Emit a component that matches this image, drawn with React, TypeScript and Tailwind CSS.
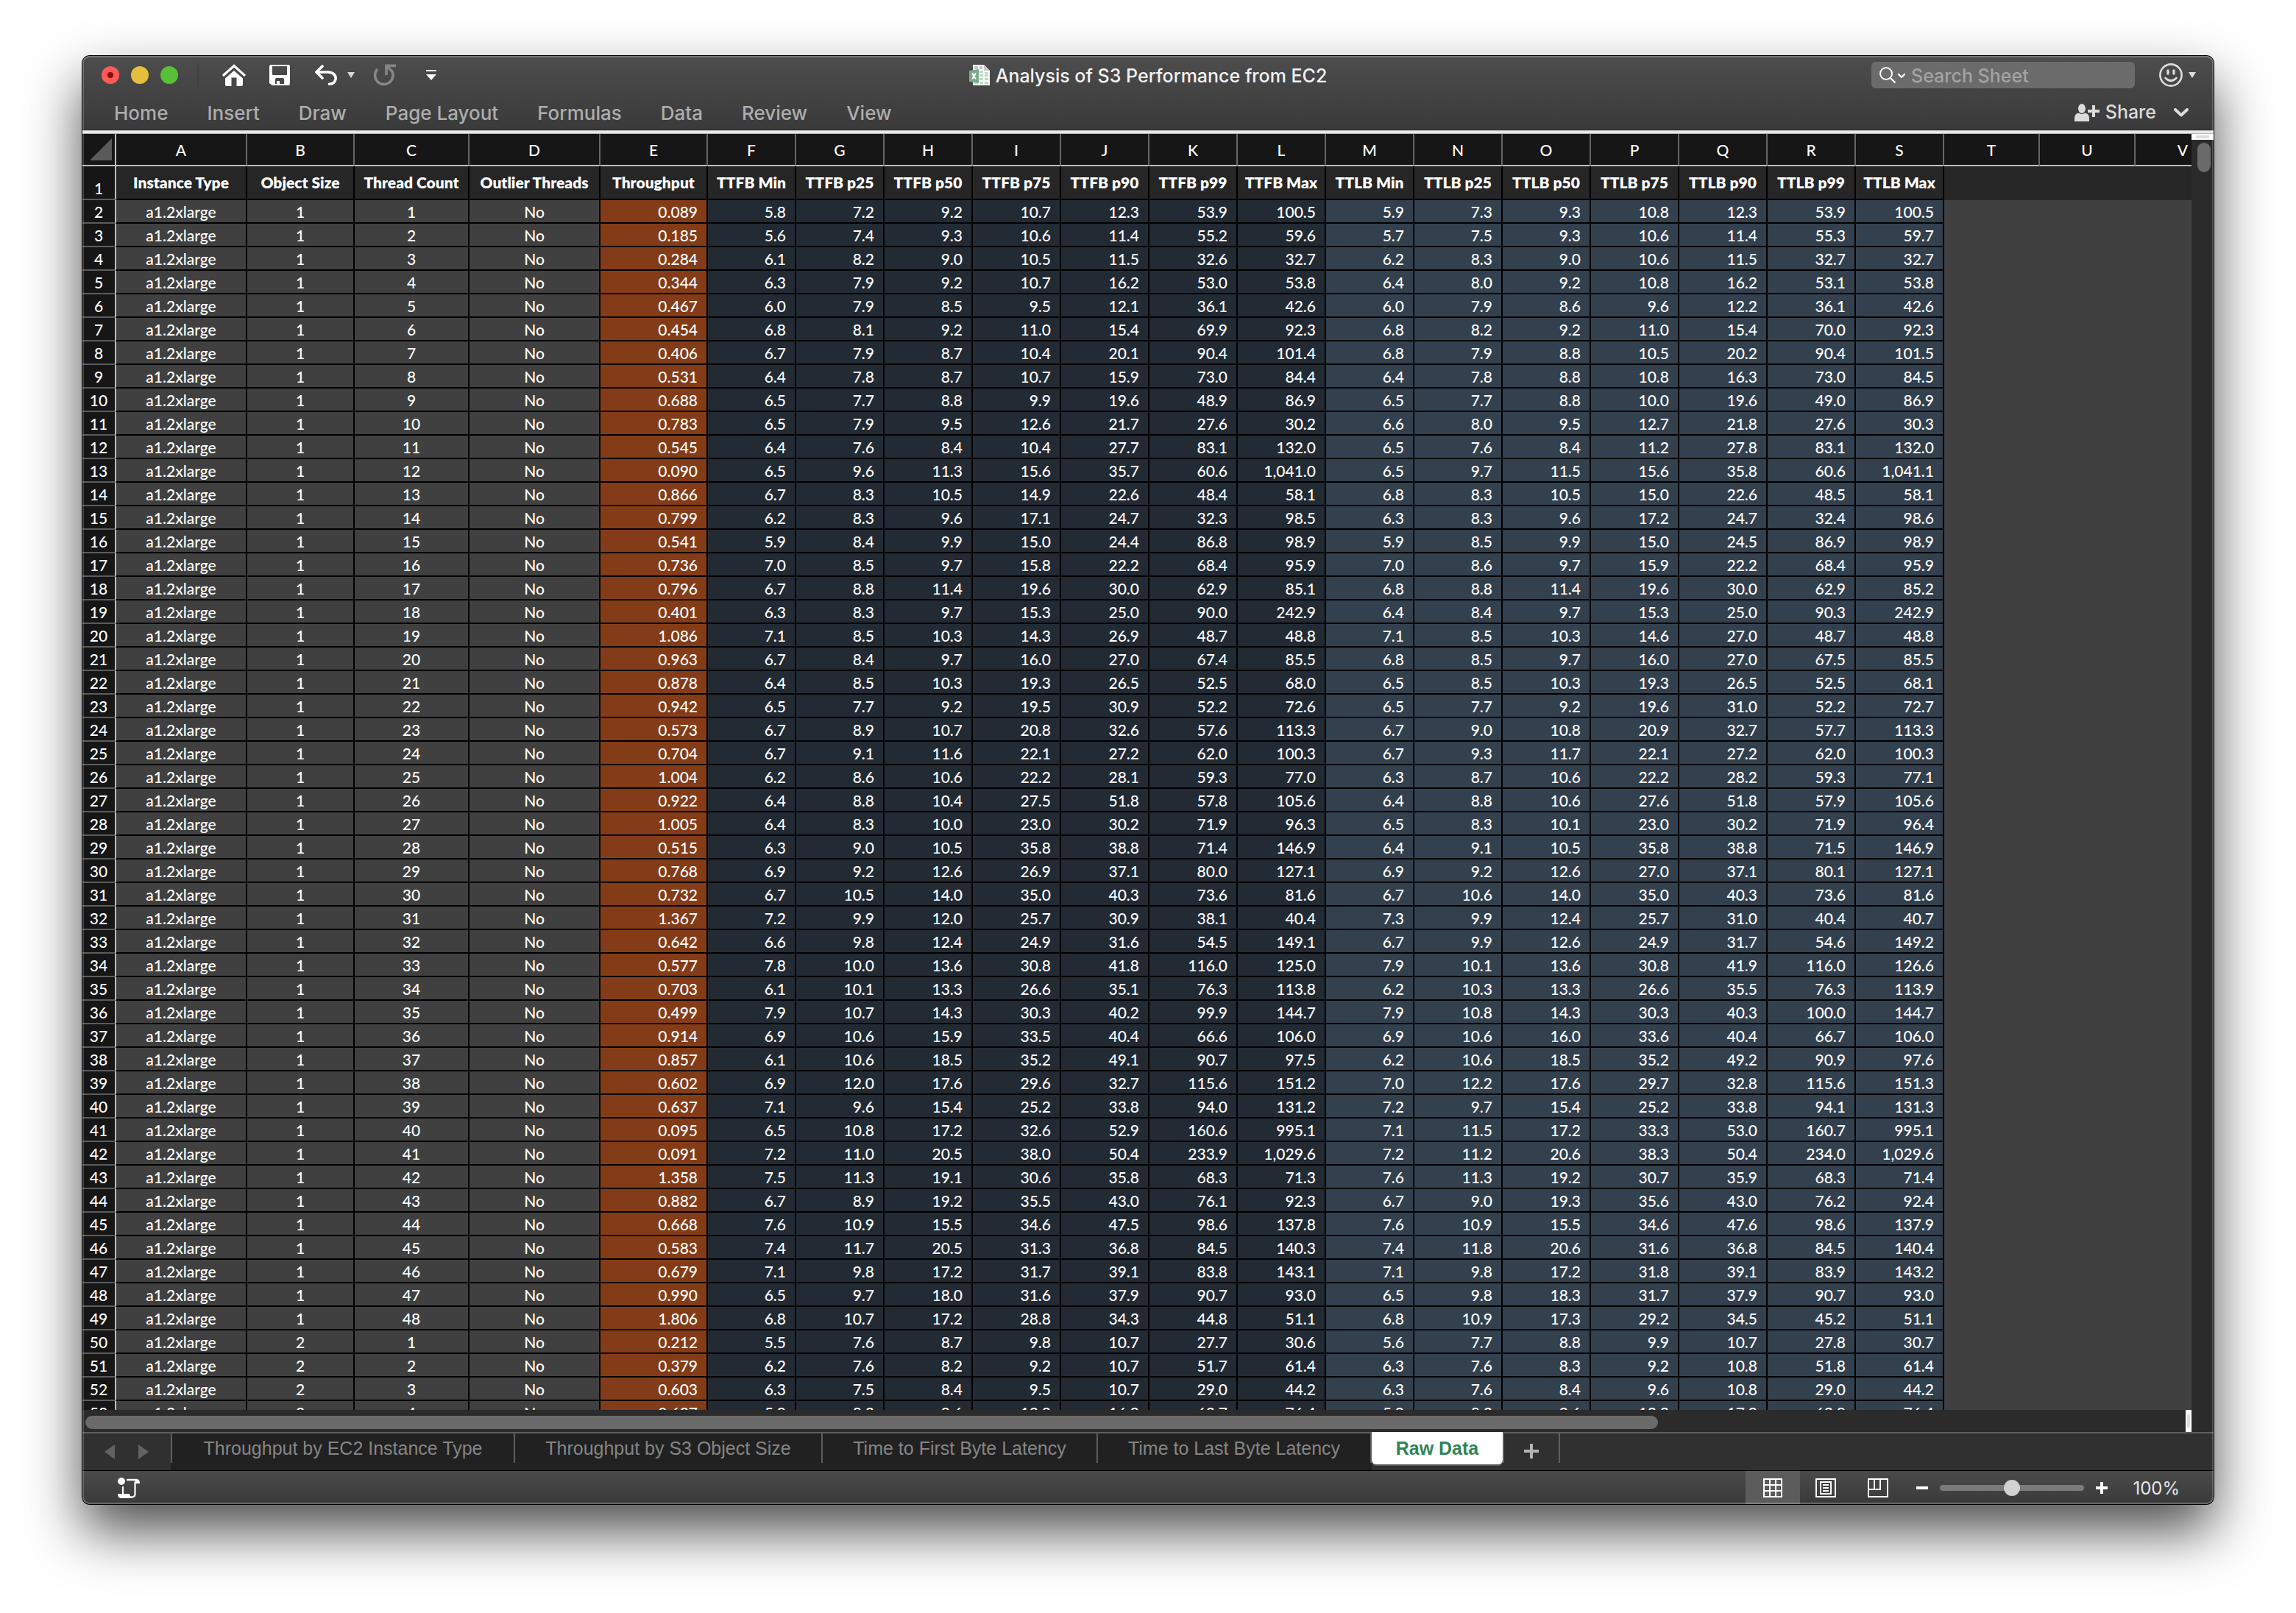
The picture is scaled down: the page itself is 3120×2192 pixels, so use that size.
import React from "react";

const COLUMNS = [
  { letter: "A", title: "Instance Type", width: 178 },
  { letter: "B", title: "Object Size", width: 146 },
  { letter: "C", title: "Thread Count", width: 156 },
  { letter: "D", title: "Outlier Threads", width: 178 },
  { letter: "E", title: "Throughput", width: 146 },
  { letter: "F", title: "TTFB Min", width: 120 },
  { letter: "G", title: "TTFB p25", width: 120 },
  { letter: "H", title: "TTFB p50", width: 120 },
  { letter: "I", title: "TTFB p75", width: 120 },
  { letter: "J", title: "TTFB p90", width: 120 },
  { letter: "K", title: "TTFB p99", width: 120 },
  { letter: "L", title: "TTFB Max", width: 120 },
  { letter: "M", title: "TTLB Min", width: 120 },
  { letter: "N", title: "TTLB p25", width: 120 },
  { letter: "O", title: "TTLB p50", width: 120 },
  { letter: "P", title: "TTLB p75", width: 120 },
  { letter: "Q", title: "TTLB p90", width: 120 },
  { letter: "R", title: "TTLB p99", width: 120 },
  { letter: "S", title: "TTLB Max", width: 120 },
  { letter: "T", title: "", width: 130 },
  { letter: "U", title: "", width: 130 },
  { letter: "V", title: "", width: 130 },
];

// object size, thread count, throughput, TTFB min..max, TTLB min..max
const DATA = `1 1 0.089 5.8 7.2 9.2 10.7 12.3 53.9 100.5 5.9 7.3 9.3 10.8 12.3 53.9 100.5
1 2 0.185 5.6 7.4 9.3 10.6 11.4 55.2 59.6 5.7 7.5 9.3 10.6 11.4 55.3 59.7
1 3 0.284 6.1 8.2 9.0 10.5 11.5 32.6 32.7 6.2 8.3 9.0 10.6 11.5 32.7 32.7
1 4 0.344 6.3 7.9 9.2 10.7 16.2 53.0 53.8 6.4 8.0 9.2 10.8 16.2 53.1 53.8
1 5 0.467 6.0 7.9 8.5 9.5 12.1 36.1 42.6 6.0 7.9 8.6 9.6 12.2 36.1 42.6
1 6 0.454 6.8 8.1 9.2 11.0 15.4 69.9 92.3 6.8 8.2 9.2 11.0 15.4 70.0 92.3
1 7 0.406 6.7 7.9 8.7 10.4 20.1 90.4 101.4 6.8 7.9 8.8 10.5 20.2 90.4 101.5
1 8 0.531 6.4 7.8 8.7 10.7 15.9 73.0 84.4 6.4 7.8 8.8 10.8 16.3 73.0 84.5
1 9 0.688 6.5 7.7 8.8 9.9 19.6 48.9 86.9 6.5 7.7 8.8 10.0 19.6 49.0 86.9
1 10 0.783 6.5 7.9 9.5 12.6 21.7 27.6 30.2 6.6 8.0 9.5 12.7 21.8 27.6 30.3
1 11 0.545 6.4 7.6 8.4 10.4 27.7 83.1 132.0 6.5 7.6 8.4 11.2 27.8 83.1 132.0
1 12 0.090 6.5 9.6 11.3 15.6 35.7 60.6 1,041.0 6.5 9.7 11.5 15.6 35.8 60.6 1,041.1
1 13 0.866 6.7 8.3 10.5 14.9 22.6 48.4 58.1 6.8 8.3 10.5 15.0 22.6 48.5 58.1
1 14 0.799 6.2 8.3 9.6 17.1 24.7 32.3 98.5 6.3 8.3 9.6 17.2 24.7 32.4 98.6
1 15 0.541 5.9 8.4 9.9 15.0 24.4 86.8 98.9 5.9 8.5 9.9 15.0 24.5 86.9 98.9
1 16 0.736 7.0 8.5 9.7 15.8 22.2 68.4 95.9 7.0 8.6 9.7 15.9 22.2 68.4 95.9
1 17 0.796 6.7 8.8 11.4 19.6 30.0 62.9 85.1 6.8 8.8 11.4 19.6 30.0 62.9 85.2
1 18 0.401 6.3 8.3 9.7 15.3 25.0 90.0 242.9 6.4 8.4 9.7 15.3 25.0 90.3 242.9
1 19 1.086 7.1 8.5 10.3 14.3 26.9 48.7 48.8 7.1 8.5 10.3 14.6 27.0 48.7 48.8
1 20 0.963 6.7 8.4 9.7 16.0 27.0 67.4 85.5 6.8 8.5 9.7 16.0 27.0 67.5 85.5
1 21 0.878 6.4 8.5 10.3 19.3 26.5 52.5 68.0 6.5 8.5 10.3 19.3 26.5 52.5 68.1
1 22 0.942 6.5 7.7 9.2 19.5 30.9 52.2 72.6 6.5 7.7 9.2 19.6 31.0 52.2 72.7
1 23 0.573 6.7 8.9 10.7 20.8 32.6 57.6 113.3 6.7 9.0 10.8 20.9 32.7 57.7 113.3
1 24 0.704 6.7 9.1 11.6 22.1 27.2 62.0 100.3 6.7 9.3 11.7 22.1 27.2 62.0 100.3
1 25 1.004 6.2 8.6 10.6 22.2 28.1 59.3 77.0 6.3 8.7 10.6 22.2 28.2 59.3 77.1
1 26 0.922 6.4 8.8 10.4 27.5 51.8 57.8 105.6 6.4 8.8 10.6 27.6 51.8 57.9 105.6
1 27 1.005 6.4 8.3 10.0 23.0 30.2 71.9 96.3 6.5 8.3 10.1 23.0 30.2 71.9 96.4
1 28 0.515 6.3 9.0 10.5 35.8 38.8 71.4 146.9 6.4 9.1 10.5 35.8 38.8 71.5 146.9
1 29 0.768 6.9 9.2 12.6 26.9 37.1 80.0 127.1 6.9 9.2 12.6 27.0 37.1 80.1 127.1
1 30 0.732 6.7 10.5 14.0 35.0 40.3 73.6 81.6 6.7 10.6 14.0 35.0 40.3 73.6 81.6
1 31 1.367 7.2 9.9 12.0 25.7 30.9 38.1 40.4 7.3 9.9 12.4 25.7 31.0 40.4 40.7
1 32 0.642 6.6 9.8 12.4 24.9 31.6 54.5 149.1 6.7 9.9 12.6 24.9 31.7 54.6 149.2
1 33 0.577 7.8 10.0 13.6 30.8 41.8 116.0 125.0 7.9 10.1 13.6 30.8 41.9 116.0 126.6
1 34 0.703 6.1 10.1 13.3 26.6 35.1 76.3 113.8 6.2 10.3 13.3 26.6 35.5 76.3 113.9
1 35 0.499 7.9 10.7 14.3 30.3 40.2 99.9 144.7 7.9 10.8 14.3 30.3 40.3 100.0 144.7
1 36 0.914 6.9 10.6 15.9 33.5 40.4 66.6 106.0 6.9 10.6 16.0 33.6 40.4 66.7 106.0
1 37 0.857 6.1 10.6 18.5 35.2 49.1 90.7 97.5 6.2 10.6 18.5 35.2 49.2 90.9 97.6
1 38 0.602 6.9 12.0 17.6 29.6 32.7 115.6 151.2 7.0 12.2 17.6 29.7 32.8 115.6 151.3
1 39 0.637 7.1 9.6 15.4 25.2 33.8 94.0 131.2 7.2 9.7 15.4 25.2 33.8 94.1 131.3
1 40 0.095 6.5 10.8 17.2 32.6 52.9 160.6 995.1 7.1 11.5 17.2 33.3 53.0 160.7 995.1
1 41 0.091 7.2 11.0 20.5 38.0 50.4 233.9 1,029.6 7.2 11.2 20.6 38.3 50.4 234.0 1,029.6
1 42 1.358 7.5 11.3 19.1 30.6 35.8 68.3 71.3 7.6 11.3 19.2 30.7 35.9 68.3 71.4
1 43 0.882 6.7 8.9 19.2 35.5 43.0 76.1 92.3 6.7 9.0 19.3 35.6 43.0 76.2 92.4
1 44 0.668 7.6 10.9 15.5 34.6 47.5 98.6 137.8 7.6 10.9 15.5 34.6 47.6 98.6 137.9
1 45 0.583 7.4 11.7 20.5 31.3 36.8 84.5 140.3 7.4 11.8 20.6 31.6 36.8 84.5 140.4
1 46 0.679 7.1 9.8 17.2 31.7 39.1 83.8 143.1 7.1 9.8 17.2 31.8 39.1 83.9 143.2
1 47 0.990 6.5 9.7 18.0 31.6 37.9 90.7 93.0 6.5 9.8 18.3 31.7 37.9 90.7 93.0
1 48 1.806 6.8 10.7 17.2 28.8 34.3 44.8 51.1 6.8 10.9 17.3 29.2 34.5 45.2 51.1
2 1 0.212 5.5 7.6 8.7 9.8 10.7 27.7 30.6 5.6 7.7 8.8 9.9 10.7 27.8 30.7
2 2 0.379 6.2 7.6 8.2 9.2 10.7 51.7 61.4 6.3 7.6 8.3 9.2 10.8 51.8 61.4
2 3 0.603 6.3 7.5 8.4 9.5 10.7 29.0 44.2 6.3 7.6 8.4 9.6 10.8 29.0 44.2
2 4 0.627 5.9 8.2 9.6 12.2 16.9 62.7 76.4 5.9 8.2 9.6 12.2 17.9 62.8 76.4`
  .split("\n")
  .map((line) => line.split(" "));

const RIBBON = ["Home", "Insert", "Draw", "Page Layout", "Formulas", "Data", "Review", "View"];

function HomeIcon() {
  return (
    <svg className="block h-[30px] w-8" viewBox="0 0 32 30" fill="none">
      <path d="M2 15 L16 2.5 L30 15" stroke="#fff" strokeWidth="3.2" strokeLinecap="round" strokeLinejoin="miter" />
      <path d="M4 19.5 L16 9 L28 19.5 V28 Q28 30 26 30 H19.5 V18.5 H12.5 V30 H6 Q4 30 4 28 Z" fill="#fff" />
    </svg>
  );
}

function SaveIcon() {
  return (
    <svg className="block size-7" viewBox="0 0 28 28">
      <path
        fillRule="evenodd"
        fill="#fff"
        d="M2 0H26Q28 0 28 2V26Q28 28 26 28H4L0 25V2Q0 0 2 0ZM4 2V13Q4 14 5 14H23Q24 14 24 13V2ZM8 26H10V22H14V26H20V20Q20 18 18 18H10Q8 18 8 20Z"
      />
    </svg>
  );
}

function UndoIcon() {
  return (
    <svg className="block h-7 w-[30px]" viewBox="0 0 30 28" fill="none" stroke="#fff" strokeWidth="3.6" strokeLinecap="round">
      <path d="M10 2 L2 10 L10 18" />
      <path d="M3 10 H18 Q28.2 11 28.2 19 Q27 26.2 19.5 26.2" />
    </svg>
  );
}

function RedoIcon() {
  return (
    <svg className="block size-[30px]" viewBox="0 0 30 30" fill="none" stroke="#868686" strokeWidth="3.6">
      <path d="M4 8 A12.2 12.2 0 1 0 24.5 9.5" strokeLinecap="round" />
      <path d="M17 15 V2.4 H30" />
      <path d="M17.5 3 L24.8 10" />
    </svg>
  );
}

function Triangle({ color }: { color: string }) {
  return (
    <svg className="block h-2 w-[10px]" viewBox="0 0 10 8">
      <path d="M0 0H10L5 8Z" fill={color} />
    </svg>
  );
}

function CustomizeIcon() {
  return (
    <svg className="block size-[14px]" viewBox="0 0 14 14" fill="#fff">
      <path d="M0 0H14V2H0ZM0 6H14L7 14Z" />
    </svg>
  );
}

function WorkbookIcon() {
  return (
    <svg className="block h-7 w-7" viewBox="0 0 28 28">
      <path d="M5 0H20L28 8V28H5Z" fill="#fbfbfb" />
      <path d="M20 0V8H28Z" fill="#c9c9c9" />
      <path d="M7 2H12V6H7ZM14 2H18V6H14Z" fill="#c4c4c4" />
      <path
        d="M14 8H19V11H14ZM21 10H26V12H21ZM14 13H19V16H14ZM21 13H26V16H21ZM14 18H19V21H14ZM21 18H26V21H21ZM7 23H12V26H7ZM14 23H19V26H14ZM21 23H26V26H21Z"
        fill="#bcdcc0"
      />
      <path d="M0 8L13 6V25L0 23Z" fill="#77a98b" />
      <path d="M4 11.5L9 19.5M9 11.5L4 19.5" stroke="#fff" strokeWidth="2" />
    </svg>
  );
}

function SmileIcon() {
  return (
    <svg className="block size-8" viewBox="0 0 32 32" fill="none" stroke="#dcdcdc">
      <circle cx="16" cy="16" r="14.6" strokeWidth="2.6" />
      <path d="M12 10V14M20 10V14" strokeWidth="3.4" strokeLinecap="round" />
      <path d="M8.500 20Q16 27.500 23.500 20" strokeWidth="2.600" strokeLinecap="round" />
    </svg>
  );
}

function ShareIcon() {
  return (
    <svg className="block h-6 w-[34px]" viewBox="0 0 34 24" fill="#dcdcdc">
      <ellipse cx="10" cy="6.5" rx="5" ry="6.5" />
      <path d="M0 24V20Q0 13 6 12.5Q10 15.5 14 12.5Q20 13 20 20V24Z" />
      <path d="M24 2H28V8H34V12H28V18H24V12H18V8H24Z" />
    </svg>
  );
}

function MacroIcon() {
  return (
    <svg className="block h-7 w-[30px]" viewBox="0 0 30 28" fill="none">
      <circle cx="5" cy="5" r="5" fill="#fff" />
      <path d="M12 3H26" stroke="#fff" strokeWidth="2.4" />
      <path d="M23 2H26Q30 2.500 30 8H23Z" fill="#fff" />
      <path d="M7 12V24M23.500 6V22Q23.500 26.500 19 26.500" stroke="#fff" strokeWidth="2.200" />
      <path d="M0 22H16Q16 25.500 19.500 25.500V28H4Q0 27.500 0 22Z" fill="#fff" />
    </svg>
  );
}

function TitleBar() {
  return (
    <div className="grid h-[52px] grid-cols-[1fr_auto_1fr] items-center">
      <div className="flex items-center pl-[26px]">
        <div className="flex gap-4">
          <button aria-label="Close" className="flex size-6 items-center justify-center rounded-full bg-[#fc5b57]">
            <span className="size-2 rounded-full bg-[#8e0b06]" />
          </button>
          <button aria-label="Minimize" className="size-6 rounded-full bg-[#e5bf3c]" />
          <button aria-label="Zoom window" className="size-6 rounded-full bg-[#57c038]" />
        </div>
        <div className="ml-[26px] h-8 w-0.5 bg-[#404040]" />
        <button aria-label="Home" className="ml-8"><HomeIcon /></button>
        <button aria-label="Save" className="ml-8"><SaveIcon /></button>
        <button aria-label="Undo" className="ml-[34px]"><UndoIcon /></button>
        <button aria-label="Undo history" className="ml-[14px]"><Triangle color="#d8d8d8" /></button>
        <button aria-label="Redo" className="ml-[26px]"><RedoIcon /></button>
        <button aria-label="Customize toolbar" className="ml-[41px]"><CustomizeIcon /></button>
      </div>
      <div className="flex items-center gap-2">
        <WorkbookIcon />
        <h1 className="pt-1 text-[25px] font-medium text-[#f2f2f2]">Analysis of S3 Performance from EC2</h1>
      </div>
      <div className="flex items-center justify-end pr-6">
        <div className="flex h-9 w-[358px] items-center rounded-md bg-[#6b6b6b] pl-[11px]">
          <svg className="block h-[22px] w-[35px]" viewBox="0 0 35 22" fill="none" stroke="#fff">
            <circle cx="9" cy="9" r="8" strokeWidth="2" />
            <path d="M15 15L21.500 21.500" strokeWidth="2.200" />
            <path d="M26 10L30 14L34 10" strokeWidth="2.200" strokeLinecap="round" strokeLinejoin="round" />
          </svg>
          <input
            type="text"
            aria-label="Search Sheet"
            placeholder="Search Sheet"
            className="ml-2 min-w-0 flex-1 bg-transparent pt-1 text-[25px] font-medium text-white outline-none placeholder:text-[#a3a3a3]"
          />
        </div>
        <button aria-label="Feedback" className="ml-[33px] flex items-center gap-2">
          <SmileIcon />
          <Triangle color="#dcdcdc" />
        </button>
      </div>
    </div>
  );
}

function RibbonBar() {
  return (
    <div className="flex h-12 items-center justify-between pt-0.5 pr-[34px] pl-[43px] text-[26px] font-medium">
      <nav className="flex gap-[53px]">
        {RIBBON.map((name) => (
          <button key={name} className="whitespace-nowrap text-[#adadad]">{name}</button>
        ))}
      </nav>
      <div className="flex items-center">
        <button className="flex items-center gap-2 text-[25px] text-[#dcdcdc]">
          <ShareIcon />
          Share
        </button>
        <button aria-label="Expand ribbon" className="ml-6">
          <svg className="block h-3 w-5" viewBox="0 0 20 12" fill="none" stroke="#dcdcdc" strokeWidth="4">
            <path d="M2 2L10 9.500L18 2" strokeLinecap="round" strokeLinejoin="round" />
          </svg>
        </button>
      </div>
    </div>
  );
}

function rowFill(column: number) {
  if (column < 4) return "bg-[#404040] text-center";
  if (column === 4) return "bg-[#843c18] pr-3 text-right";
  if (column < 12) return "bg-[#222a34] pr-3 text-right";
  return "bg-[#33404e] pr-3 text-right";
}

function Sheet() {
  const total = COLUMNS.reduce((sum, c) => sum + c.width, 46);
  return (
    <div className="min-w-0 flex-1 overflow-hidden bg-[#404040]">
      <table
        className="table-fixed border-separate border-spacing-0 font-['Lato','Liberation_Sans',sans-serif] text-[21px] leading-[28px] font-medium text-white"
        style={{ width: total }}
      >
        <colgroup>
          <col className="w-[46px]" />
          {COLUMNS.map((c) => (
            <col key={c.letter} style={{ width: c.width }} />
          ))}
        </colgroup>
        <thead>
          <tr className="h-11 bg-[#161616]">
            <td className="border-r-2 border-b-2 border-[#bdbdbd] p-0">
              <svg className="ml-auto mr-1 block h-[30px] w-[30px]" viewBox="0 0 30 30">
                <path d="M30 0V30H0Z" fill="#5a5a5a" />
              </svg>
            </td>
            {COLUMNS.map((c) => (
              <th
                key={c.letter}
                scope="col"
                className="border-r-2 border-b-2 border-r-[#666] border-b-[#bdbdbd] p-0 pt-0.5 text-center font-medium"
              >
                {c.letter}
              </th>
            ))}
          </tr>
        </thead>
        <tbody>
          <tr className="h-[46px] bg-[#262626]">
            <th
              scope="row"
              className="border-r-2 border-b-2 border-r-[#bdbdbd] border-b-[#5c5c5c] bg-[#161616] p-0 align-bottom font-medium"
            >
              1
            </th>
            {COLUMNS.slice(0, 19).map((c) => (
              <td key={c.letter} className="whitespace-nowrap border-r-2 border-b-2 border-black p-0 text-center font-extrabold">
                {c.title}
              </td>
            ))}
            <td colSpan={3} />
          </tr>
          {DATA.map(([size, threads, ...rest], i) => (
            <tr key={i} className="h-8">
              <th
                scope="row"
                className="border-r-2 border-b-2 border-r-[#bdbdbd] border-b-[#5c5c5c] bg-[#161616] p-0 pt-0.5 font-medium"
              >
                {i + 2}
              </th>
              {["a1.2xlarge", size, threads, "No", ...rest].map((value, column) => (
                <td key={column} className={`border-r-2 border-b-2 border-black p-0 pt-0.5 ${rowFill(column)}`}>
                  {value}
                </td>
              ))}
              <td colSpan={3} className="p-0" />
            </tr>
          ))}
        </tbody>
      </table>
    </div>
  );
}

function SheetTab({ name, width }: { name: string; width: string }) {
  return (
    <div className="flex h-full items-start border-t-2 border-[#5e5e5e] bg-[#212121]">
      <button className={`h-10 whitespace-nowrap border-r-2 border-[#5e5e5e] text-[#858585] ${width}`}>{name}</button>
    </div>
  );
}

function SheetTabs() {
  return (
    <div className="flex h-[52px] bg-[#303030] font-['Liberation_Sans',Arial,sans-serif] text-[25px] leading-[40px]">
      <div className="flex w-[120px] items-center gap-8 border-t-2 border-[#5e5e5e] pl-[30px]">
        <button aria-label="Previous sheet">
          <svg className="block h-5 w-[14px]" viewBox="0 0 14 20"><path d="M14 0V20L0 10Z" fill="#626262" /></svg>
        </button>
        <button aria-label="Next sheet">
          <svg className="block h-5 w-[14px]" viewBox="0 0 14 20"><path d="M0 0V20L14 10Z" fill="#626262" /></svg>
        </button>
      </div>
      <div className="flex items-start border-t-2 border-[#5e5e5e] bg-[#212121]">
        <div className="h-10 w-0.5 bg-[#5e5e5e]" />
      </div>
      <SheetTab name="Throughput by EC2 Instance Type" width="w-[466px]" />
      <SheetTab name="Throughput by S3 Object Size" width="w-[418px]" />
      <SheetTab name="Time to First Byte Latency" width="w-[374px]" />
      <SheetTab name="Time to Last Byte Latency" width="w-[372px]" />
      <button className="h-[44px] w-[178px] rounded-b-md bg-white font-bold text-[#2f8554] shadow-[0_2px_0_#5a5a5a]">
        Raw Data
      </button>
      <div className="flex flex-1 items-start border-t-2 border-[#5e5e5e]">
        <button aria-label="New sheet" className="flex h-10 w-[78px] items-center justify-center border-x-2 border-[#5e5e5e] pt-2">
          <svg className="block size-5" viewBox="0 0 20 20"><path d="M8 0H12V8H20V12H12V20H8V12H0V8H8Z" fill="#b4b4b4" /></svg>
        </button>
      </div>
    </div>
  );
}

function StatusBar() {
  return (
    <div className="flex h-[46px] items-center justify-between border-t border-black bg-linear-to-b from-[#4a4a4a] to-[#3a3a3a] pr-[46px]">
      <button aria-label="Record macro" className="ml-12"><MacroIcon /></button>
      <div className="flex h-full items-center">
        <button aria-label="Normal view" className="flex h-full w-[74px] items-center justify-center bg-[#5c5c5c]">
          <svg className="block size-[26px]" viewBox="0 0 26 26" fill="none" stroke="#fff" strokeWidth="2">
            <path d="M1 1H25V25H1ZM9 1V25M17 1V25M1 9H25M1 17H25" />
          </svg>
        </button>
        <button aria-label="Page layout view" className="ml-[21px]">
          <svg className="block h-[26px] w-7" viewBox="0 0 28 26" fill="none" stroke="#fff" strokeWidth="2">
            <path d="M1 1H27V25H1ZM7 5H21V21H7ZM10 9H18M10 13H18M10 17H18" />
          </svg>
        </button>
        <button aria-label="Page break preview" className="ml-[43px]">
          <svg className="block h-[26px] w-7" viewBox="0 0 28 26" fill="none" stroke="#fff" strokeWidth="2">
            <path d="M1 1H27V25H1ZM1 15H17V1M9 1V15" />
          </svg>
        </button>
        <button aria-label="Zoom out" className="ml-[38px]">
          <svg className="block size-4" viewBox="0 0 16 16"><path d="M0 6H16V10H0Z" fill="#fff" /></svg>
        </button>
        <input
          type="range"
          aria-label="Zoom level"
          min="0"
          max="100"
          defaultValue="50"
          className="mx-4 h-[22px] w-[196px] appearance-none bg-transparent [&::-webkit-slider-runnable-track]:h-2 [&::-webkit-slider-runnable-track]:rounded-full [&::-webkit-slider-runnable-track]:bg-[#7a7a7a] [&::-webkit-slider-thumb]:-mt-[7px] [&::-webkit-slider-thumb]:size-[22px] [&::-webkit-slider-thumb]:appearance-none [&::-webkit-slider-thumb]:rounded-full [&::-webkit-slider-thumb]:bg-[#d2d2d2]"
        />
        <button aria-label="Zoom in">
          <svg className="block size-4" viewBox="0 0 16 16"><path d="M6 0H10V6H16V10H10V16H6V10H0V6H6Z" fill="#fff" /></svg>
        </button>
        <button className="ml-[34px] pt-0.5 text-[24px] text-[#e6e6e6]">100%</button>
      </div>
    </div>
  );
}

export default function App() {
  return (
    <div className="flex h-screen flex-col bg-white px-28 pt-[76px] pb-[148px] font-['Inter','Liberation_Sans',sans-serif]">
      <main className="relative flex min-h-0 flex-1 flex-col overflow-hidden rounded-[10px] shadow-[0_0_0_1px_#000,0_36px_76px_rgba(0,0,0,0.7)]">
        <header className="border-b border-[#2c2c2c] bg-linear-to-b from-[#4d4d4d] to-[#3a3a3a]">
          <TitleBar />
          <RibbonBar />
        </header>
        <div className="h-[5px] bg-linear-to-b from-[#b5b5b5] via-white to-[#a5a5a5]" />
        <div className="flex min-h-0 flex-1 bg-[#2b2b2b]">
          <div className="flex min-w-0 flex-1 flex-col">
            <div className="flex min-h-0 flex-1">
              <Sheet />
            </div>
            <div className="flex h-[30px] items-end pl-1">
              <div className="mb-1 h-[18px] w-[2137px] rounded-full bg-[#6a6a6a]" />
              <div className="ml-auto flex h-full w-2 items-center justify-center bg-white">
                <div className="h-[18px] w-1 bg-[#dedede]" />
              </div>
            </div>
          </div>
          <div className="flex w-[30px] flex-col">
            <div className="flex h-2 w-full items-center justify-center bg-white">
              <div className="h-1 w-[18px] bg-[#dedede]" />
            </div>
            <div className="mt-1 ml-2 h-10 w-[18px] rounded-full bg-[#6a6a6a]" />
          </div>
        </div>
        <SheetTabs />
        <StatusBar />
        <div className="pointer-events-none absolute inset-0 rounded-[10px] shadow-[inset_0_0_0_2px_rgba(255,255,255,0.22)]" />
      </main>
    </div>
  );
}
